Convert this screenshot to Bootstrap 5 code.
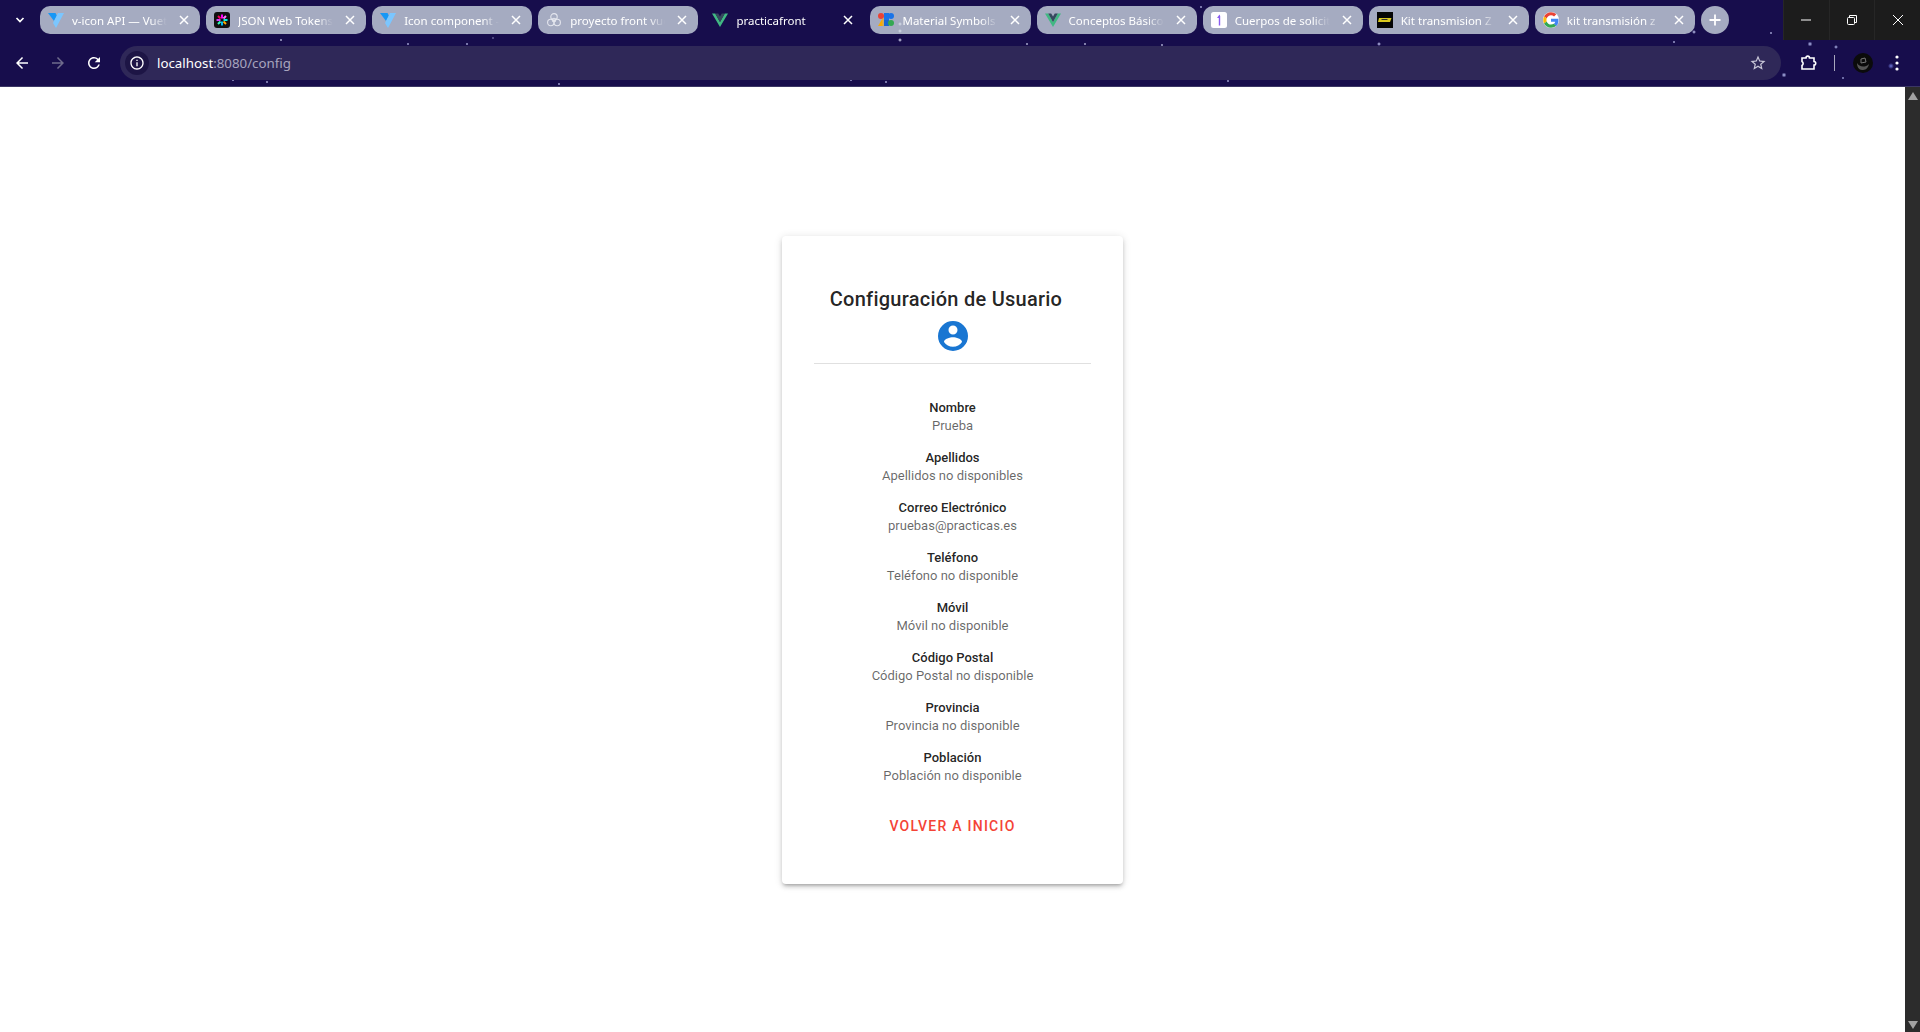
<!DOCTYPE html>
<html lang="es">
<head>
    <title>practicafront</title>
    <link href="https://cdn.jsdelivr.net/npm/bootstrap@5.3.3/dist/css/bootstrap.min.css" rel="stylesheet">
    <style>
        html, body { height: 100%; overflow: hidden; background: #fff; }
        .browser-head {
            height: 87px;
            border-bottom: 1px solid #3b3664;
            font-family: "Noto Sans", "Liberation Sans", sans-serif;
            background-color: #170d4c;
            background-image:
                radial-gradient(circle 1.5px at 281px 40px, #dfe3ff, transparent),
                radial-gradient(circle 1.5px at 408px 44px, #cfd3ff, transparent),
                radial-gradient(circle 1.5px at 467px 44px, #cfd3ff, transparent),
                radial-gradient(circle 1px at 493px 38px, #cfd3ff, transparent),
                radial-gradient(circle 1.5px at 233px 80px, #cfd3ff, transparent),
                radial-gradient(circle 1.5px at 267px 82px, #cfd3ff, transparent),
                radial-gradient(circle 1.5px at 559px 84px, #cfd3ff, transparent),
                radial-gradient(circle 1.5px at 851px 80px, #cfd3ff, transparent),
                radial-gradient(circle 1.5px at 886px 82px, #cfd3ff, transparent),
                radial-gradient(circle 2px at 900px 24px, #e8eaff, transparent),
                radial-gradient(circle 2px at 900px 31px, #e8eaff, transparent),
                radial-gradient(circle 2px at 900px 40px, #e8eaff, transparent),
                radial-gradient(circle 1.5px at 1027px 44px, #dfe3ff, transparent),
                radial-gradient(circle 1.5px at 1085px 44px, #dfe3ff, transparent),
                radial-gradient(circle 1.5px at 1162px 45px, #dfe3ff, transparent),
                radial-gradient(circle 1.5px at 1228px 81px, #cfd3ff, transparent),
                radial-gradient(circle 1.5px at 1201px 7px, #cfd3ff, transparent),
                radial-gradient(circle 2px at 1379px 44px, #cfd3ff, transparent),
                radial-gradient(circle 1.5px at 1674px 42px, #cfd3ff, transparent),
                radial-gradient(circle 2px at 1694px 32px, #cfd3ff, transparent),
                radial-gradient(circle 1.5px at 1771px 33px, #cfd3ff, transparent),
                radial-gradient(circle 2.5px at 1810px 44px, #b9c0f5, transparent),
                radial-gradient(circle 2px at 1836px 47px, #b9c0f5, transparent),
                radial-gradient(circle 2.5px at 1784px 75px, #b9c0f5, transparent),
                radial-gradient(circle 1.5px at 1843px 78px, #b9c0f5, transparent),
                radial-gradient(circle 3px at 1891px 66px, #6f78d8, transparent);
        }
        .tab-strip { height: 46px; }
        .tab-list { padding-top: 6px; gap: 6px; }
        .tab-menu { width: 40px; height: 40px; }
        .brow-tab {
            width: 160.100px;
            height: 28px;
            padding: 0 10px 0 8px;
            gap: 8px;
            border-radius: 10px;
            background: rgba(214, 224, 232, .75);
            color: #fff;
            font-size: 11.500px;
        }
        .brow-tab.is-active { background: transparent; }
        .tab-name {
            flex: 1;
            min-width: 0;
            padding-top: 2px;
            overflow: hidden;
            white-space: nowrap;
            -webkit-mask-image: linear-gradient(90deg, #000 80%, transparent 97%);
            mask-image: linear-gradient(90deg, #000 80%, transparent 97%);
        }
        .new-tab { width: 28px; height: 28px; background: rgba(214, 224, 232, .75); }
        .win-controls { width: 137px; height: 40px; background: #1c1c1c; }
        .win-btn { flex: 1; border-left: 1px solid #262626; }
        .tool-row { height: 40px; padding-bottom: 6px; }
        .nav-ic { width: 36px; }
        .nav-first { margin-left: 4px; }
        .addr-bar {
            width: 1661px;
            height: 34px;
            margin-left: 8px;
            padding: 0 14px 0 5px;
            border-radius: 17px;
            background: #2f2858;
            font-size: 13.300px;
        }
        .addr-info { width: 24px; height: 24px; margin-right: 8px; background: #1d1545; }
        .addr-host { padding-top: 1px; color: #fff; }
        .addr-rest { padding-top: 1px; color: #a8a5bf; }
        .ext-btn { width: 36px; margin-left: 9px; }
        .tool-sep { width: 1px; height: 16px; margin: 0 18px 0 8px; background: #a8a7bd; }
        .kebab-btn { margin-left: 21px; }
        .page-body { height: 945px; }
        .page-main { min-width: 0; }
        .page-scroll { width: 15px; padding: 5px 0 3px; background: #2c2c2c; }
        .config-box {
            width: 341px;
            padding: 47px 32px 39px;
            background: #fff;
            border-radius: 4px;
            font-family: Roboto, "Liberation Sans", sans-serif;
            box-shadow: 0 3px 3px -2px rgba(0,0,0,.2), 0 3px 4px rgba(0,0,0,.14), 0 1px 8px rgba(0,0,0,.12);
        }
        .config-title {
            margin: 0 13px 3px 0;
            font-size: 20px;
            font-weight: 500;
            line-height: 32px;
            letter-spacing: .25px;
            color: rgba(0,0,0,.87);
            white-space: nowrap;
        }
        .config-rule { margin: 9px 0 35px; border-top: 1px solid #e0e0e0; opacity: 1; }
        .field-item { margin-bottom: 14px; font-size: 13px; line-height: 18px; }
        .field-item:last-of-type { margin-bottom: 0; }
        .field-label { font-weight: 500; color: rgba(0,0,0,.87); }
        .field-value { color: rgba(0,0,0,.6); }
        .back-link {
            height: 36px;
            margin-top: 24px;
            color: #f44336;
            font-size: 14px;
            font-weight: 500;
            letter-spacing: 1.250px;
            text-transform: uppercase;
            text-decoration: none;
        }
    </style>
</head>
<body>
    <svg width="0" height="0" class="position-absolute">
        <symbol id="ic-close" viewBox="0 0 12 12"><path d="M2 2l8 8M10 2l-8 8" stroke="#fff" stroke-width="1.500" fill="none"/></symbol>
        <symbol id="ic-vuetify" viewBox="0 0 16 16"><path d="M0 1h7.500L9 4l-3 5z" fill="#1697f6"/><path d="M16 1h-6L5 11l3 5z" fill="#7bc6ff"/></symbol>
        <symbol id="ic-vue" viewBox="0 0 16 16"><path d="M0 1.500h3.200L8 10l4.800-8.500H16L8 15z" fill="#41b883"/><path d="M3.200 1.500h3L8 4.600l1.800-3.100h3L8 10z" fill="#35495e"/></symbol>
    </svg>

    <header class="browser-head">
        <div class="tab-strip d-flex align-items-start">
            <div class="tab-menu d-flex align-items-center justify-content-center">
                <svg width="12" height="12" viewBox="0 0 12 12"><path d="M2.500 4l3.500 3.500L9.500 4" stroke="#fff" stroke-width="1.700" fill="none"/></svg>
            </div>
            <div class="tab-list d-flex">
                <div class="brow-tab d-flex align-items-center">
                    <svg width="16" height="16"><use href="#ic-vuetify"/></svg>
                    <span class="tab-name">v-icon API — Vuet</span>
                    <svg width="12" height="12"><use href="#ic-close"/></svg>
                </div>
                <div class="brow-tab d-flex align-items-center">
                    <svg width="16" height="16" viewBox="0 0 16 16"><rect width="16" height="16" rx="3" fill="#111"/><path d="M8 2.500v4" stroke="#f0f" stroke-width="2"/><path d="M8 9.500v4" stroke="#00b9f1" stroke-width="2"/><path d="M2.500 8h4" stroke="#d63aff" stroke-width="2"/><path d="M9.500 8h4" stroke="#00f2e6" stroke-width="2"/><path d="M4 4l2.500 2.500" stroke="#fb015b" stroke-width="2"/><path d="M12 4L9.500 6.500" stroke="#f7f" stroke-width="2"/><path d="M4 12l2.500-2.500" stroke="#3fb" stroke-width="2"/><path d="M12 12L9.500 9.500" stroke="#fa0" stroke-width="2"/></svg>
                    <span class="tab-name">JSON Web Tokens</span>
                    <svg width="12" height="12"><use href="#ic-close"/></svg>
                </div>
                <div class="brow-tab d-flex align-items-center">
                    <svg width="16" height="16"><use href="#ic-vuetify"/></svg>
                    <span class="tab-name">Icon component -</span>
                    <svg width="12" height="12"><use href="#ic-close"/></svg>
                </div>
                <div class="brow-tab d-flex align-items-center">
                    <svg width="16" height="16" viewBox="0 0 16 16" fill="none" stroke="#e4e6ee" stroke-width="1.100"><circle cx="8" cy="4.800" r="3.200"/><circle cx="4.800" cy="10.500" r="3.200"/><circle cx="11.200" cy="10.500" r="3.200"/><circle cx="8" cy="8" r="1.800"/></svg>
                    <span class="tab-name">proyecto front vue</span>
                    <svg width="12" height="12"><use href="#ic-close"/></svg>
                </div>
                <div class="brow-tab is-active d-flex align-items-center">
                    <svg width="16" height="16"><use href="#ic-vue"/></svg>
                    <span class="tab-name">practicafront</span>
                    <svg width="12" height="12"><use href="#ic-close"/></svg>
                </div>
                <div class="brow-tab d-flex align-items-center">
                    <svg width="16" height="16" viewBox="0 0 16 16"><circle cx="3" cy="4" r="3" fill="#ea4335"/><path d="M0 14L4.500 6.500V14z" fill="#f9ab00"/><path d="M4.500 14h1V6L4.500 7z" fill="#f9ab00"/><rect x="6" y="1" width="5" height="7" fill="#1a73e8"/><rect x="6" y="8" width="5" height="6" fill="#1967d2"/><circle cx="13" cy="4" r="3" fill="#1a73e8"/><circle cx="13" cy="11" r="3" fill="#34a853"/></svg>
                    <span class="tab-name">Material Symbols</span>
                    <svg width="12" height="12"><use href="#ic-close"/></svg>
                </div>
                <div class="brow-tab d-flex align-items-center">
                    <svg width="16" height="16"><use href="#ic-vue"/></svg>
                    <span class="tab-name">Conceptos Básico</span>
                    <svg width="12" height="12"><use href="#ic-close"/></svg>
                </div>
                <div class="brow-tab d-flex align-items-center">
                    <svg width="16" height="16" viewBox="0 0 16 16"><rect width="16" height="16" rx="2.500" fill="#fff"/><path d="M8.500 2.500L6 6h1.800v7.500h1.400V4z" fill="#8a5cf0"/></svg>
                    <span class="tab-name">Cuerpos de solicit</span>
                    <svg width="12" height="12"><use href="#ic-close"/></svg>
                </div>
                <div class="brow-tab d-flex align-items-center">
                    <svg width="16" height="16" viewBox="0 0 16 16"><rect width="16" height="16" fill="#050505"/><path d="M2 6h12.500l-1.500 4H1z" fill="#d9c81e"/><path d="M4.500 7.500h6" stroke="#333" stroke-width="1"/></svg>
                    <span class="tab-name">Kit transmision Z</span>
                    <svg width="12" height="12"><use href="#ic-close"/></svg>
                </div>
                <div class="brow-tab d-flex align-items-center">
                    <svg width="16" height="16" viewBox="0 0 48 48"><circle cx="24" cy="24" r="24" fill="#fff"/><path fill="#EA4335" d="M24 10c3.500 0 6.600 1.200 9.100 3.500l6.800-6.800C35.800 3 30.300.800 24 .800 14.900.800 7 6 3.200 13.600l7.900 6.100C13 14 18 10 24 10z"/><path fill="#4285F4" d="M46.400 24.500c0-1.600-.1-3.100-.4-4.500H24v9h12.600c-.5 2.900-2.200 5.400-4.600 7l7.700 6c4.500-4.100 6.700-10.200 6.700-17.500z"/><path fill="#FBBC05" d="M11.100 28.300c-.5-1.400-.8-2.800-.8-4.300s.3-3 .8-4.300l-7.900-6.100C1.600 16.800.7 20.300.7 24s.9 7.200 2.500 10.400z"/><path fill="#34A853" d="M24 47.200c6.300 0 11.600-2.100 15.700-5.700l-7.700-6c-2.100 1.400-4.800 2.300-8 2.300-6 0-11-4-12.900-9.500l-7.900 6.100C7 41.900 14.900 47.200 24 47.200z"/></svg>
                    <span class="tab-name">kit transmisión z</span>
                    <svg width="12" height="12"><use href="#ic-close"/></svg>
                </div>
                <div class="new-tab rounded-circle d-flex align-items-center justify-content-center">
                    <svg width="14" height="14" viewBox="0 0 14 14"><path d="M7 1.500v11M1.500 7h11" stroke="#fff" stroke-width="1.800"/></svg>
                </div>
            </div>
            <div class="win-controls ms-auto d-flex">
                <div class="win-btn d-flex align-items-center justify-content-center">
                    <svg width="12" height="12" viewBox="0 0 12 12"><path d="M1 6h10" stroke="#fff"/></svg>
                </div>
                <div class="win-btn d-flex align-items-center justify-content-center">
                    <svg width="12" height="12" viewBox="0 0 12 12" fill="none" stroke="#fff"><rect x="1.500" y="3.500" width="7" height="7" rx="1"/><path d="M3.500 3V1.500h7v7H9"/></svg>
                </div>
                <div class="win-btn d-flex align-items-center justify-content-center">
                    <svg width="12" height="12" viewBox="0 0 12 12"><path d="M1 1l10 10M11 1L1 11" stroke="#fff"/></svg>
                </div>
            </div>
        </div>
        <div class="tool-row d-flex align-items-center">
            <div class="nav-ic nav-first d-flex justify-content-center">
                <svg width="18" height="18" viewBox="0 0 24 24" fill="#fff"><path d="M20 11H7.830l5.590-5.590L12 4l-8 8 8 8 1.410-1.410L7.830 13H20v-2z"/></svg>
            </div>
            <div class="nav-ic d-flex justify-content-center">
                <svg width="18" height="18" viewBox="0 0 24 24" fill="#6f6b8c"><path d="M4 11h12.170l-5.590-5.590L12 4l8 8-8 8-1.410-1.410L16.170 13H4v-2z"/></svg>
            </div>
            <div class="nav-ic d-flex justify-content-center">
                <svg width="18" height="18" viewBox="0 0 24 24" fill="#fff"><path d="M17.650 6.350A7.958 7.958 0 0 0 12 4c-4.420 0-7.990 3.580-7.990 8s3.570 8 7.990 8c3.730 0 6.840-2.550 7.730-6h-2.080A5.990 5.990 0 0 1 12 18c-3.310 0-6-2.690-6-6s2.690-6 6-6c1.660 0 3.140.690 4.220 1.780L13 11h7V4l-2.350 2.350z"/></svg>
            </div>
            <div class="addr-bar d-flex align-items-center">
                <span class="addr-info rounded-circle d-flex align-items-center justify-content-center">
                    <svg width="16" height="16" viewBox="0 0 24 24" fill="#fff"><path d="M11 7h2v2h-2zm0 4h2v6h-2zm1-9C6.480 2 2 6.480 2 12s4.480 10 10 10 10-4.480 10-10S17.520 2 12 2zm0 18c-4.410 0-8-3.590-8-8s3.590-8 8-8 8 3.590 8 8-3.590 8-8 8z"/></svg>
                </span>
                <span class="addr-host">localhost</span><span class="addr-rest">:8080/config</span>
                <svg class="ms-auto" width="18" height="18" viewBox="0 0 24 24" fill="#c9c7d8"><path d="M22 9.240l-7.190-.62L12 2 9.190 8.630 2 9.240l5.460 4.730L5.820 21 12 17.270 18.180 21l-1.630-7.030L22 9.240zM12 15.400l-3.760 2.270 1-4.280-3.320-2.880 4.380-.38L12 6.100l1.710 4.040 4.380.38-3.320 2.880 1 4.280L12 15.400z"/></svg>
            </div>
            <div class="ext-btn d-flex justify-content-center">
                <svg width="18" height="18" viewBox="0 0 18 18" fill="none" stroke="#fff" stroke-width="1.600"><path d="M3 4h4c0-2.500 3.500-2.500 3.500 0H15v3.500c2.300 0 2.300 3.500 0 3.500v4H3v-3.500c1.500-1 1.500-3 0-4z"/></svg>
            </div>
            <span class="tool-sep"></span>
            <svg width="20" height="20" viewBox="0 0 20 20"><circle cx="10" cy="10" r="10" fill="#0b0b0b"/><path d="M4 10c2 4 8 5 12 1-1 5-4 6-7 6-3 0-5-3-5-7z" fill="#555"/><path d="M8 6l4-1 1 4-5 1z" fill="none" stroke="#777"/></svg>
            <div class="kebab-btn d-flex">
                <svg width="6" height="18" viewBox="0 0 6 18" fill="#fff"><circle cx="3" cy="3" r="1.600"/><circle cx="3" cy="9" r="1.600"/><circle cx="3" cy="15" r="1.600"/></svg>
            </div>
        </div>
    </header>

    <div class="page-body d-flex">
        <main class="page-main flex-grow-1 d-flex align-items-center justify-content-center">
            <section class="config-box text-center">
                <h1 class="config-title">Configuración de Usuario</h1>
                <svg class="d-block mx-auto" width="36" height="36" viewBox="0 0 24 24" fill="#1976d2"><path d="M12,19.200C9.500,19.200 7.290,17.920 6,16C6.030,14 10,12.900 12,12.900C14,12.900 17.970,14 18,16C16.710,17.920 14.500,19.200 12,19.200M12,5A3,3 0 0,1 15,8A3,3 0 0,1 12,11A3,3 0 0,1 9,8A3,3 0 0,1 12,5M12,2A10,10 0 0,0 2,12A10,10 0 0,0 12,22A10,10 0 0,0 22,12A10,10 0 0,0 12,2Z"/></svg>
                <hr class="config-rule">
                <div class="field-item"><div class="field-label">Nombre</div><div class="field-value">Prueba</div></div>
                <div class="field-item"><div class="field-label">Apellidos</div><div class="field-value">Apellidos no disponibles</div></div>
                <div class="field-item"><div class="field-label">Correo Electrónico</div><div class="field-value">pruebas@practicas.es</div></div>
                <div class="field-item"><div class="field-label">Teléfono</div><div class="field-value">Teléfono no disponible</div></div>
                <div class="field-item"><div class="field-label">Móvil</div><div class="field-value">Móvil no disponible</div></div>
                <div class="field-item"><div class="field-label">Código Postal</div><div class="field-value">Código Postal no disponible</div></div>
                <div class="field-item"><div class="field-label">Provincia</div><div class="field-value">Provincia no disponible</div></div>
                <div class="field-item"><div class="field-label">Población</div><div class="field-value">Población no disponible</div></div>
                <a href="#" class="back-link d-flex align-items-center justify-content-center">Volver a inicio</a>
            </section>
        </main>
        <aside class="page-scroll d-flex flex-column justify-content-between align-items-center">
            <svg width="10" height="8" viewBox="0 0 10 8" fill="#a3a3a3"><path d="M5 0L10 8H0z"/></svg>
            <svg width="10" height="8" viewBox="0 0 10 8" fill="#a3a3a3"><path d="M0 0h10L5 8z"/></svg>
        </aside>
    </div>
</body>
</html>
